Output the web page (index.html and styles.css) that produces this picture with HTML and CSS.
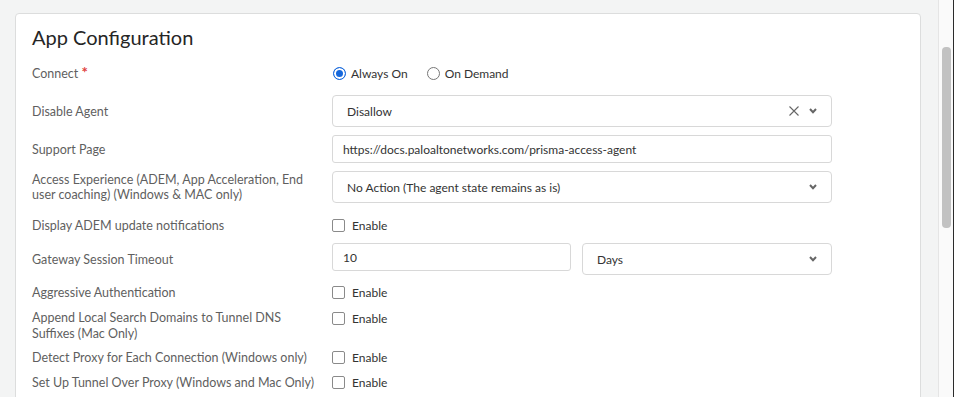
FILE: index.html
```html
<!doctype html>
<html>
    <head>
        <meta http-equiv="Content-Type" content="text/html; charset=utf-8" />
        <title>App Configuration</title>
        <link rel="stylesheet" href="styles.css">
    </head>
<body>

    <div class="page">
        <div class="main">
            <div class="card">
                <h2 class="title">App Configuration</h2>

                <div class="row row-connect">
                    <label class="label">Connect <span class="req">*</span></label>
                    <div class="field radios">
                        <label class="radio"><input type="radio" name="connect" checked> Always On</label>
                        <label class="radio"><input type="radio" name="connect"> On Demand</label>
                    </div>
                </div>

                <div class="row">
                    <label class="label">Disable Agent</label>
                    <div class="field">
                        <div class="select">
                            <span class="select-value">Disallow</span>
                            <svg class="clear" width="10" height="10" viewBox="0 0 10 10"><path d="M0.5 0.5 L9.5 9.5 M9.5 0.5 L0.5 9.5" stroke="#666" stroke-width="1.1" fill="none"/></svg>
                            <svg class="caret" width="8" height="6" viewBox="0 0 8 6"><path d="M1 1 L4 4.2 L7 1" stroke="#666" stroke-width="2" fill="none"/></svg>
                        </div>
                    </div>
                </div>

                <div class="row">
                    <label class="label">Support Page</label>
                    <div class="field">
                        <input class="input" type="text" value="https://docs.paloaltonetworks.com/prisma-access-agent">
                    </div>
                </div>

                <div class="row row-access">
                    <label class="label">Access Experience (ADEM, App Acceleration, End user coaching) (Windows &amp; MAC only)</label>
                    <div class="field">
                        <div class="select">
                            <span class="select-value">No Action (The agent state remains as is)</span>
                            <svg class="caret" width="8" height="6" viewBox="0 0 8 6"><path d="M1 1 L4 4.2 L7 1" stroke="#666" stroke-width="2" fill="none"/></svg>
                        </div>
                    </div>
                </div>

                <div class="row row-check row-display">
                    <label class="label">Display ADEM update notifications</label>
                    <div class="field">
                        <label class="check"><input type="checkbox"> Enable</label>
                    </div>
                </div>

                <div class="row row-gateway">
                    <label class="label">Gateway Session Timeout</label>
                    <div class="field pair">
                        <input class="input input-short" type="text" value="10">
                        <div class="select select-short">
                            <span class="select-value">Days</span>
                            <svg class="caret" width="8" height="6" viewBox="0 0 8 6"><path d="M1 1 L4 4.2 L7 1" stroke="#666" stroke-width="2" fill="none"/></svg>
                        </div>
                    </div>
                </div>

                <div class="row row-check">
                    <label class="label">Aggressive Authentication</label>
                    <div class="field">
                        <label class="check"><input type="checkbox"> Enable</label>
                    </div>
                </div>

                <div class="row row-top">
                    <label class="label">Append Local Search Domains to Tunnel DNS Suffixes (Mac Only)</label>
                    <div class="field">
                        <label class="check"><input type="checkbox"> Enable</label>
                    </div>
                </div>

                <div class="row row-check row-tight">
                    <label class="label">Detect Proxy for Each Connection (Windows only)</label>
                    <div class="field">
                        <label class="check"><input type="checkbox"> Enable</label>
                    </div>
                </div>

                <div class="row row-check">
                    <label class="label">Set Up Tunnel Over Proxy (Windows and Mac Only)</label>
                    <div class="field">
                        <label class="check"><input type="checkbox"> Enable</label>
                    </div>
                </div>
            </div>
        </div>

        <div class="scrollbar">
            <div class="thumb"></div>
        </div>
    </div>

</body>
</html>
```

FILE: styles.css
```css
* {
    margin: 0;
    padding: 0;
    box-sizing: border-box;
}

body {
    background-color: #f3f4f4;
    font-family: Lato, "Open Sans", sans-serif;
    color: #333;
    overflow: hidden;
}

.page {
    display: flex;
    height: 397px;
}

.main {
    flex: 1;
    overflow: hidden;
}

.card {
    width: 906px;
    height: 420px;
    margin: 13px 0 0 15px;
    padding: 11px 16px 0;
    background-color: #fff;
    border: 1px solid #dcdddd;
    border-radius: 4px;
}

.title {
    font-size: 20px;
    font-weight: normal;
    line-height: 24px;
    color: #252525;
    margin-bottom: 12px;
}

.row {
    display: grid;
    grid-template-columns: 300px 500px;
    align-items: center;
    margin-bottom: 8px;
}

.label {
    font-size: 12.5px;
    line-height: 15px;
    color: #5f5f5f;
    padding-right: 14px;
}

.req {
    color: #e0403c;
    font-size: 15px;
    line-height: 10px;
    font-weight: bold;
}

.field {
    font-size: 12px;
    color: #333;
}

/* 行间距微调 */
.row-connect {
    height: 24px;
    margin-bottom: 10px;
}

.row-access {
    margin-bottom: 12px;
}

.row-check {
    height: 20px;
}

.row-display {
    margin-bottom: 8px;
}

.row-gateway {
    margin-bottom: 7px;
}

.row-top {
    align-items: start;
    margin-bottom: 5px;
}

.row-top .label {
    line-height: 16px;
}

.row-top .check {
    height: 16px;
}

.row-tight {
    margin-bottom: 5px;
}

/* radio */
.radios {
    display: flex;
    gap: 18px;
}

.radio,
.check {
    display: flex;
    align-items: center;
    gap: 5px;
    color: #333;
}

.radio input {
    appearance: none;
    -webkit-appearance: none;
    width: 13px;
    height: 13px;
    border: 1px solid #777;
    border-radius: 50%;
    background: #fff;
    margin-left: 1px;
}

.radio input:checked {
    border-color: #1668dc;
    background-color: #1668dc;
    box-shadow: inset 0 0 0 2px #fff;
}

.check {
    gap: 7px;
}

.check input {
    appearance: none;
    -webkit-appearance: none;
    width: 13px;
    height: 13px;
    border: 1px solid #8a8a8a;
    border-radius: 2px;
    background: #fff;
}

/* select / input */
.select {
    display: flex;
    align-items: center;
    height: 32px;
    padding: 0 14px 0 14px;
    border: 1px solid #d8d8d8;
    border-radius: 4px;
    background: #fff;
}

.select-value {
    flex: 1;
    font-size: 12px;
    color: #333;
}

.clear {
    margin-right: 10px;
}

.input {
    display: block;
    width: 100%;
    height: 28px;
    padding: 0 10px;
    border: 1px solid #d8d8d8;
    border-radius: 3px;
    font-family: Lato, "Open Sans", sans-serif;
    font-size: 12px;
    color: #333;
    outline: 0;
}

.pair {
    display: flex;
    align-items: flex-start;
    gap: 11px;
}

.input-short {
    width: 239px;
}

.select-short {
    width: 250px;
}

/* scrollbar */
.scrollbar {
    width: 16px;
    height: 397px;
    background-color: #fafafa;
    border-left: 1px solid #e5e5e5;
    border-right: 1px solid #2b2b2b;
    padding: 47px 2px 0 3px;
}

.thumb {
    height: 181px;
    border-radius: 4px;
    background-color: #c2c2c2;
}
```
